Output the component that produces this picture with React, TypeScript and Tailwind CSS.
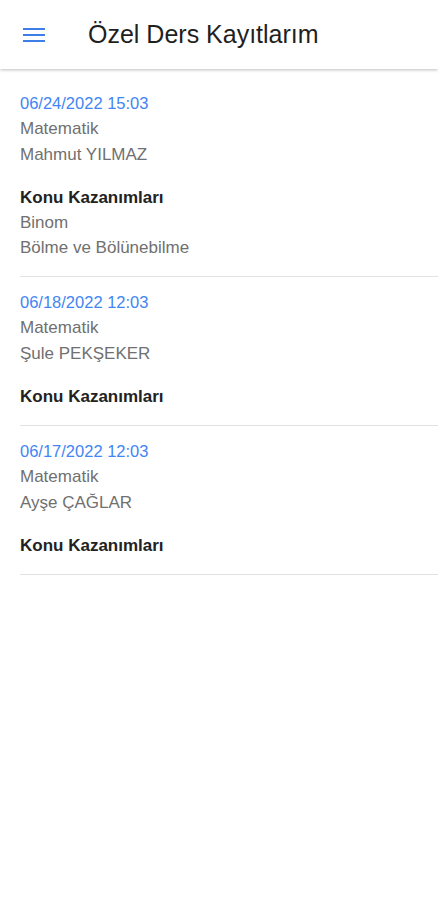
type Lesson = {
  id: number;
  date: string;
  subject: string;
  teacher: string;
  topics: string[];
};

const lessons: Lesson[] = [
  {
    id: 1,
    date: "06/24/2022 15:03",
    subject: "Matematik",
    teacher: "Mahmut YILMAZ",
    topics: ["Binom", "Bölme ve Bölünebilme"],
  },
  { id: 2, date: "06/18/2022 12:03", subject: "Matematik", teacher: "Şule PEKŞEKER", topics: [] },
  { id: 3, date: "06/17/2022 12:03", subject: "Matematik", teacher: "Ayşe ÇAĞLAR", topics: [] },
];

const LessonRow = ({ lesson }: { lesson: Lesson }) => {
  return (
    <div className="ml-5 border-b border-[#e2e2e2] pt-3 pb-4">
      <div className="text-[16.5px] leading-[26px] text-[#4285f4]">{lesson.date}</div>
      <div className="text-[17px] leading-[26px] text-[#707070]">{lesson.subject}</div>
      <div className="text-[17px] leading-[26px] text-[#707070]">{lesson.teacher}</div>
      <div className="mt-[17px]">
        <div className="text-[17px] font-bold leading-[25px] text-[#222222]">Konu Kazanımları</div>
        {lesson.topics.map(t => (
          <div key={t} className="text-[17px] leading-[25px] text-[#707070]">
            {t}
          </div>
        ))}
      </div>
    </div>
  );
};

export default function App() {
  return (
    <div className="min-h-[900px] bg-white [font-family:'Liberation_Sans',Arial,sans-serif]">
      <div className="flex h-[69px] items-center bg-white shadow-[0_1px_3px_rgba(0,0,0,0.25)]">
        <div className="ml-[23px] flex w-[22px] flex-col gap-[4px]">
          <div className="h-[2px] bg-[#3d7fe6]" />
          <div className="h-[2px] bg-[#3d7fe6]" />
          <div className="h-[2px] bg-[#3d7fe6]" />
        </div>
        <div className="ml-[43px] text-[25px] text-[#1f1f1f]">Özel Ders Kayıtlarım</div>
      </div>
      <div className="pt-[9px]">
        {lessons.map(l => (
          <LessonRow key={l.id} lesson={l} />
        ))}
      </div>
    </div>
  );
}
